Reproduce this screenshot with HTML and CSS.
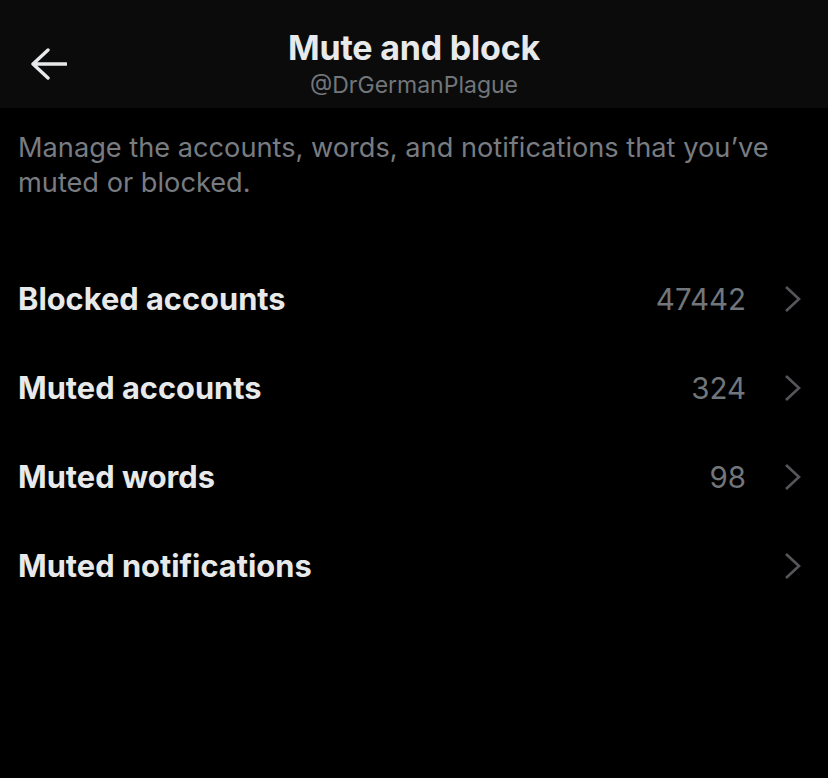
FILE: index.html
```html
<!DOCTYPE html>
<html>
<head>
<meta charset="utf-8">
<link rel="stylesheet" href="styles.css">
</head>
<body>
<div class="page">
  <header class="header">
    <div class="back">
      <svg width="36" height="32" viewBox="0 0 36 32"><path d="M17 2 L2 16 L17 30 M2 16 L35 16" fill="none" stroke="#e7e9ea" stroke-width="3.4" stroke-linecap="round" stroke-linejoin="round"/></svg>
    </div>
    <div class="titles">
      <div class="title">Mute and block</div>
      <div class="sub">@DrGermanPlague</div>
    </div>
  </header>
  <p class="desc">Manage the accounts, words, and notifications that you’ve muted or blocked.</p>
  <ul class="list">
    <li class="row"><span class="label">Blocked accounts</span><span class="count">47442</span><svg class="chev" width="17" height="28" viewBox="0 0 17 28"><path d="M2 2 L15 14 L2 26" fill="none" stroke="#555659" stroke-width="2.6"/></svg></li>
    <li class="row"><span class="label">Muted accounts</span><span class="count">324</span><svg class="chev" width="17" height="28" viewBox="0 0 17 28"><path d="M2 2 L15 14 L2 26" fill="none" stroke="#555659" stroke-width="2.6"/></svg></li>
    <li class="row"><span class="label">Muted words</span><span class="count">98</span><svg class="chev" width="17" height="28" viewBox="0 0 17 28"><path d="M2 2 L15 14 L2 26" fill="none" stroke="#555659" stroke-width="2.6"/></svg></li>
    <li class="row"><span class="label">Muted notifications</span><span class="count"></span><svg class="chev" width="17" height="28" viewBox="0 0 17 28"><path d="M2 2 L15 14 L2 26" fill="none" stroke="#555659" stroke-width="2.6"/></svg></li>
  </ul>
</div>
</body>
</html>
```
FILE: styles.css
```css
* { box-sizing: border-box; }
html, body { margin: 0; padding: 0; background: #000; }
body {
  width: 828px;
  height: 778px;
  overflow: hidden;
  font-family: "Inter", "Liberation Sans", sans-serif;
  color: #e7e9ea;
}
.header {
  height: 108px;
  background: #0b0b0b;
  display: flex;
  align-items: flex-start;
  position: relative;
}
.back {
  position: absolute;
  left: 31px;
  top: 48px;
  width: 36px;
  height: 32px;
  display: flex;
}
.titles {
  flex: 1;
  display: flex;
  flex-direction: column;
  align-items: center;
  padding-top: 28px;
}
.title {
  font-size: 34px;
  font-weight: 700;
  line-height: 40px;
  letter-spacing: -0.2px;
  color: #e7e9ea;
}
.sub {
  font-size: 23px;
  line-height: 28px;
  color: #71767b;
  margin-top: 3px;
}
.desc {
  margin: 0;
  padding: 22px 20px 0 18px;
  font-size: 27.2px;
  line-height: 35px;
  color: #787c81;
}
.list {
  list-style: none;
  margin: 54px 0 0 0;
  padding: 0;
}
.row {
  height: 89px;
  display: flex;
  align-items: center;
  padding: 0 27px 0 18px;
}
.label {
  flex: 1;
  font-size: 30.8px;
  font-weight: 700;
  color: #e7e9ea;
}
.count {
  font-size: 29.5px;
  color: #71767b;
  margin-right: 38px;
}
.chev { display: block; }
```
